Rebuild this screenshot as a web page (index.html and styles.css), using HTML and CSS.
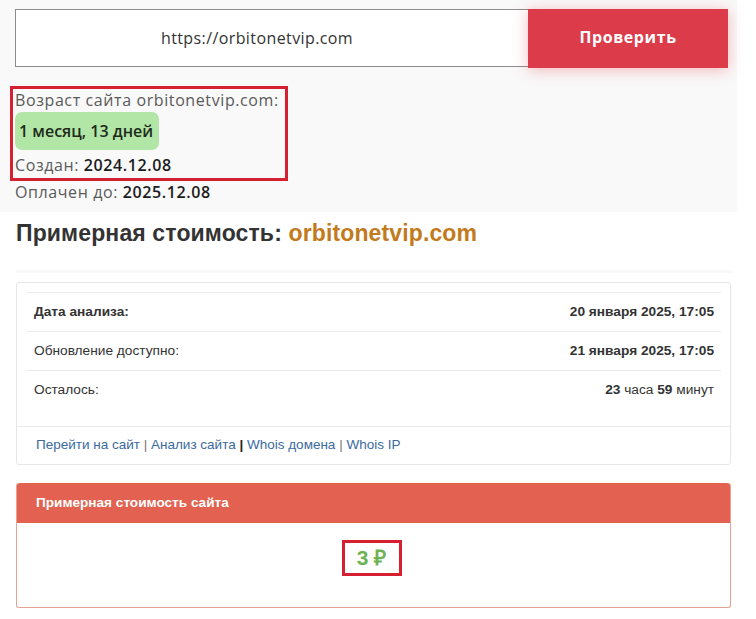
FILE: index.html
```html
<!DOCTYPE html>
<html lang="ru">
<head>
<meta charset="utf-8">
<title>orbitonetvip.com</title>
<link rel="stylesheet" href="styles.css">
</head>
<body>
<div class="top">
  <div class="search">
    <div class="url-input">https://orbitonetvip.com</div>
    <button class="check-btn">Проверить</button>
  </div>
  <div class="info">
    <div class="age-box">
      <div class="line first">Возраст сайта orbitonetvip.com:</div>
      <div class="pill">1 месяц, 13 дней</div>
      <div class="line created">Создан: <b>2024.12.08</b></div>
    </div>
    <div class="line paid">Оплачен до: <b>2025.12.08</b></div>
  </div>
</div>
<div class="heading-wrap">
  <h1 class="heading">Примерная стоимость: <span class="domain">orbitonetvip.com</span></h1>
</div>
<div class="card">
  <div class="rows">
    <div class="row"><span class="label strong">Дата анализа:</span><span class="value">20 января 2025, 17:05</span></div>
    <div class="row"><span class="label">Обновление доступно:</span><span class="value">21 января 2025, 17:05</span></div>
    <div class="row last"><span class="label">Осталось:</span><span class="value">23 <span class="norm">часа</span> 59 <span class="norm">минут</span></span></div>
  </div>
  <div class="links">
    <a href="#">Перейти на сайт</a> <span class="sep">|</span> <a href="#">Анализ сайта</a> <span class="sep dark">|</span> <a href="#">Whois домена</a> <span class="sep">|</span> <a href="#">Whois IP</a>
  </div>
</div>
<div class="price-card">
  <div class="price-head">Примерная стоимость сайта</div>
  <div class="price-body">
    <span class="price">3 ₽</span>
  </div>
</div>
</body>
</html>
```

FILE: styles.css
```css
html, body {
  margin: 0;
  padding: 0;
  background: #ffffff;
}
body {
  width: 756px;
  height: 619px;
  overflow: hidden;
  font-family: "Liberation Sans", Arial, sans-serif;
}
.top {
  width: 737px;
  height: 212px;
  box-sizing: border-box;
  background: #f9f9f9;
  padding-top: 9px;
}
.search {
  display: flex;
  margin-left: 15px;
  width: 713px;
}
.url-input {
  width: 513px;
  height: 58px;
  box-sizing: border-box;
  border: 1px solid #8c8c8c;
  border-right: none;
  background: #fff;
  display: flex;
  align-items: center;
  justify-content: center;
  font-family: "Open Sans", sans-serif;
  font-size: 16px;
  letter-spacing: 0.4px;
  color: #333;
  padding-right: 30px;
}
.check-btn {
  width: 200px;
  height: 59px;
  border: none;
  background: #dc3b4a;
  color: #fff;
  font-family: "Open Sans", sans-serif;
  font-weight: 700;
  font-size: 16px;
  letter-spacing: 0.6px;
  box-shadow: 0 2px 14px rgba(230, 60, 75, 0.35);
  padding: 0 0 4px 0;
}
.info {
  margin-top: 18px;
  margin-left: 10px;
  font-family: "Open Sans", sans-serif;
  font-size: 16px;
  letter-spacing: 0.6px;
  color: #5a5a5a;
}
.age-box {
  width: 278px;
  box-sizing: border-box;
  border: 3px solid #d42030;
  padding: 0 0 0 2px;
}
.line {
  white-space: nowrap;
}
.line.first {
  height: 23px;
  line-height: 23px;
}
.line.created {
  height: 28px;
  line-height: 30px;
}
.line b {
  color: #1c1c1c;
  font-weight: 600;
}
.pill {
  width: fit-content;
  background: #b2e6a6;
  border-radius: 7px;
  height: 38px;
  line-height: 38px;
  padding: 0 6px 0 4px;
  color: #1d2b1a;
  font-weight: 600;
  letter-spacing: 0;
}
.paid {
  padding-left: 5px;
  height: 24px;
  line-height: 22px;
}
.heading-wrap {
  margin: 0 24px 0 16px;
  height: 58px;
  border-bottom: 3px solid #f8f8f8;
}
.heading {
  margin: 0;
  padding-top: 7px;
  font-family: "Liberation Sans", Arial, sans-serif;
  font-size: 23px;
  letter-spacing: 0.13px;
  font-weight: 700;
  color: #333;
  line-height: 28px;
}
.domain {
  color: #c27a1c;
}
.card {
  margin: 9px 25px 0 16px;
  border: 1px solid #e6e6e6;
  border-radius: 3px;
  background: #fff;
  font-size: 13.7px;
  color: #333;
}
.rows {
  padding: 9px 9px 0 9px;
}
.row {
  display: flex;
  justify-content: space-between;
  height: 38px;
  line-height: 38px;
  border-top: 1px solid #ececec;
  padding: 0 7px 0 8px;
}
.row.last {
  height: 55px;
  line-height: 38px;
}
.label.strong {
  font-weight: 700;
}
.value {
  font-weight: 700;
}
.value .norm {
  font-weight: 400;
}
.links {
  border-top: 1px solid #ececec;
  height: 37px;
  line-height: 36px;
  padding-left: 19px;
  font-size: 13.5px;
}
.links a {
  color: #3a6aa0;
  text-decoration: none;
}
.sep {
  color: #777;
}
.sep.dark {
  color: #222;
  font-weight: 700;
}
.price-card {
  margin: 18px 25px 0 16px;
  border: 1px solid #e8a294;
  border-top: none;
  border-radius: 3px;
  background: #fff;
}
.price-head {
  background: #e26150;
  color: #fff;
  font-weight: 700;
  font-size: 13.6px;
  height: 40px;
  line-height: 40px;
  padding-left: 19px;
  border-radius: 3px 3px 0 0;
}
.price-body {
  height: 84px;
  display: flex;
  justify-content: center;
  align-items: center;
}
.price {
  display: inline-block;
  border: 3px solid #d42030;
  padding: 0 13px 0 12px;
  height: 30px;
  line-height: 30px;
  color: #6db352;
  font-weight: 700;
  font-size: 21px;
  margin-left: -3px;
  margin-top: -14px;
}
```
